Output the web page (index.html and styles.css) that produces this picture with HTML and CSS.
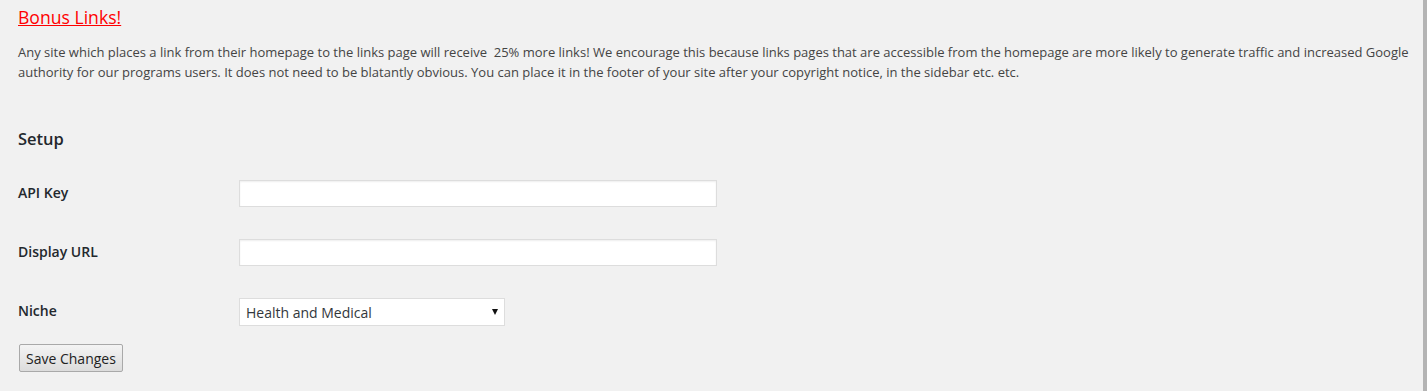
FILE: index.html
```html
<!DOCTYPE html>
<html lang="en">
  <head>
    <meta charset="UTF-8" />
    <title>Bonus Links Settings</title>
    <link rel="stylesheet" href="styles.css">
  </head>
  <body>
    <div class="wrap">
      <!-- bonus notice -->
      <h2 class="bonus-title"><a href="#">Bonus Links!</a></h2>
      <p class="bonus-desc">
        Any site which places a link from their homepage to the links page will receive&nbsp; 25% more links! We encourage this because links pages that are accessible from the homepage are more likely to generate traffic and increased Google authority for our programs users. It does not need to be blatantly obvious. You can place it in the footer of your site after your copyright notice, in the sidebar etc. etc.
      </p>

      <!-- setup form -->
      <h3 class="section-title">Setup</h3>
      <form class="setup-form">
        <div class="form-row">
          <label class="form-label" for="api-key">API Key</label>
          <input class="text-input" id="api-key" type="text" />
        </div>
        <div class="form-row">
          <label class="form-label" for="display-url">Display URL</label>
          <input class="text-input" id="display-url" type="text" />
        </div>
        <div class="form-row">
          <label class="form-label" for="niche">Niche</label>
          <div class="select-wrap">
            <select class="select-input" id="niche">
              <option>Health and Medical</option>
            </select>
          </div>
        </div>
        <button class="save-btn" type="button">Save Changes</button>
      </form>
    </div>
  </body>
</html>
```

FILE: styles.css
```css
:root {
  --bg: #f1f1f1;
  --text: #444;
  --label: #23282d;
  --border: #ddd;
}

* {
  margin: 0;
  padding: 0;
  box-sizing: border-box;
}

body {
  font-family: "Open Sans", "Liberation Sans", sans-serif;
  font-size: 13px;
  background-color: var(--bg);
  color: var(--text);
  height: 100vh;
  overflow: hidden;
}

.wrap {
  height: 100%;
  padding: 6px 7px 0 18px;
  border-right: 4px solid #b4b4b4;
}

/* bonus notice */
.bonus-title {
  font-size: 17.6px;
  font-weight: 400;
  line-height: 22px;
}

.bonus-title a {
  color: #ff0000;
  text-decoration: underline;
}

.bonus-desc {
  margin-top: 14px;
  line-height: 20px;
}

/* setup form */
.section-title {
  margin-top: 46px;
  font-size: 16.5px;
  font-weight: 600;
  line-height: 22px;
  color: var(--label);
}

.setup-form {
  margin-top: 14px;
}

.form-row {
  display: flex;
  align-items: center;
  height: 59px;
}

.form-label {
  width: 221px;
  padding-bottom: 2px;
  font-size: 14px;
  font-weight: 600;
  color: var(--label);
}

.text-input {
  width: 478px;
  height: 27px;
  border: 1px solid var(--border);
  box-shadow: inset 0 1px 2px rgba(0, 0, 0, 0.07);
  background: #fff;
  font-family: inherit;
  font-size: 14px;
}

.select-wrap {
  position: relative;
  margin-top: 1px;
}

.select-input {
  appearance: none;
  -webkit-appearance: none;
  width: 266px;
  height: 28px;
  padding: 0 24px 0 6px;
  border: 1px solid var(--border);
  border-radius: 0;
  background: #fff;
  color: #32373c;
  font-family: inherit;
  font-size: 14px;
}

.select-wrap::after {
  content: "";
  position: absolute;
  right: 7px;
  top: 11px;
  border-left: 3.5px solid transparent;
  border-right: 3.5px solid transparent;
  border-top: 6px solid #111;
  pointer-events: none;
}

.save-btn {
  margin: 3px 0 0 1px;
  height: 28px;
  padding: 0 6px;
  border: 1px solid #a9a9a9;
  border-radius: 2px;
  background: linear-gradient(to bottom, #f4f4f4, #dcdcdc);
  color: #222;
  font-family: inherit;
  font-size: 14px;
}
```
